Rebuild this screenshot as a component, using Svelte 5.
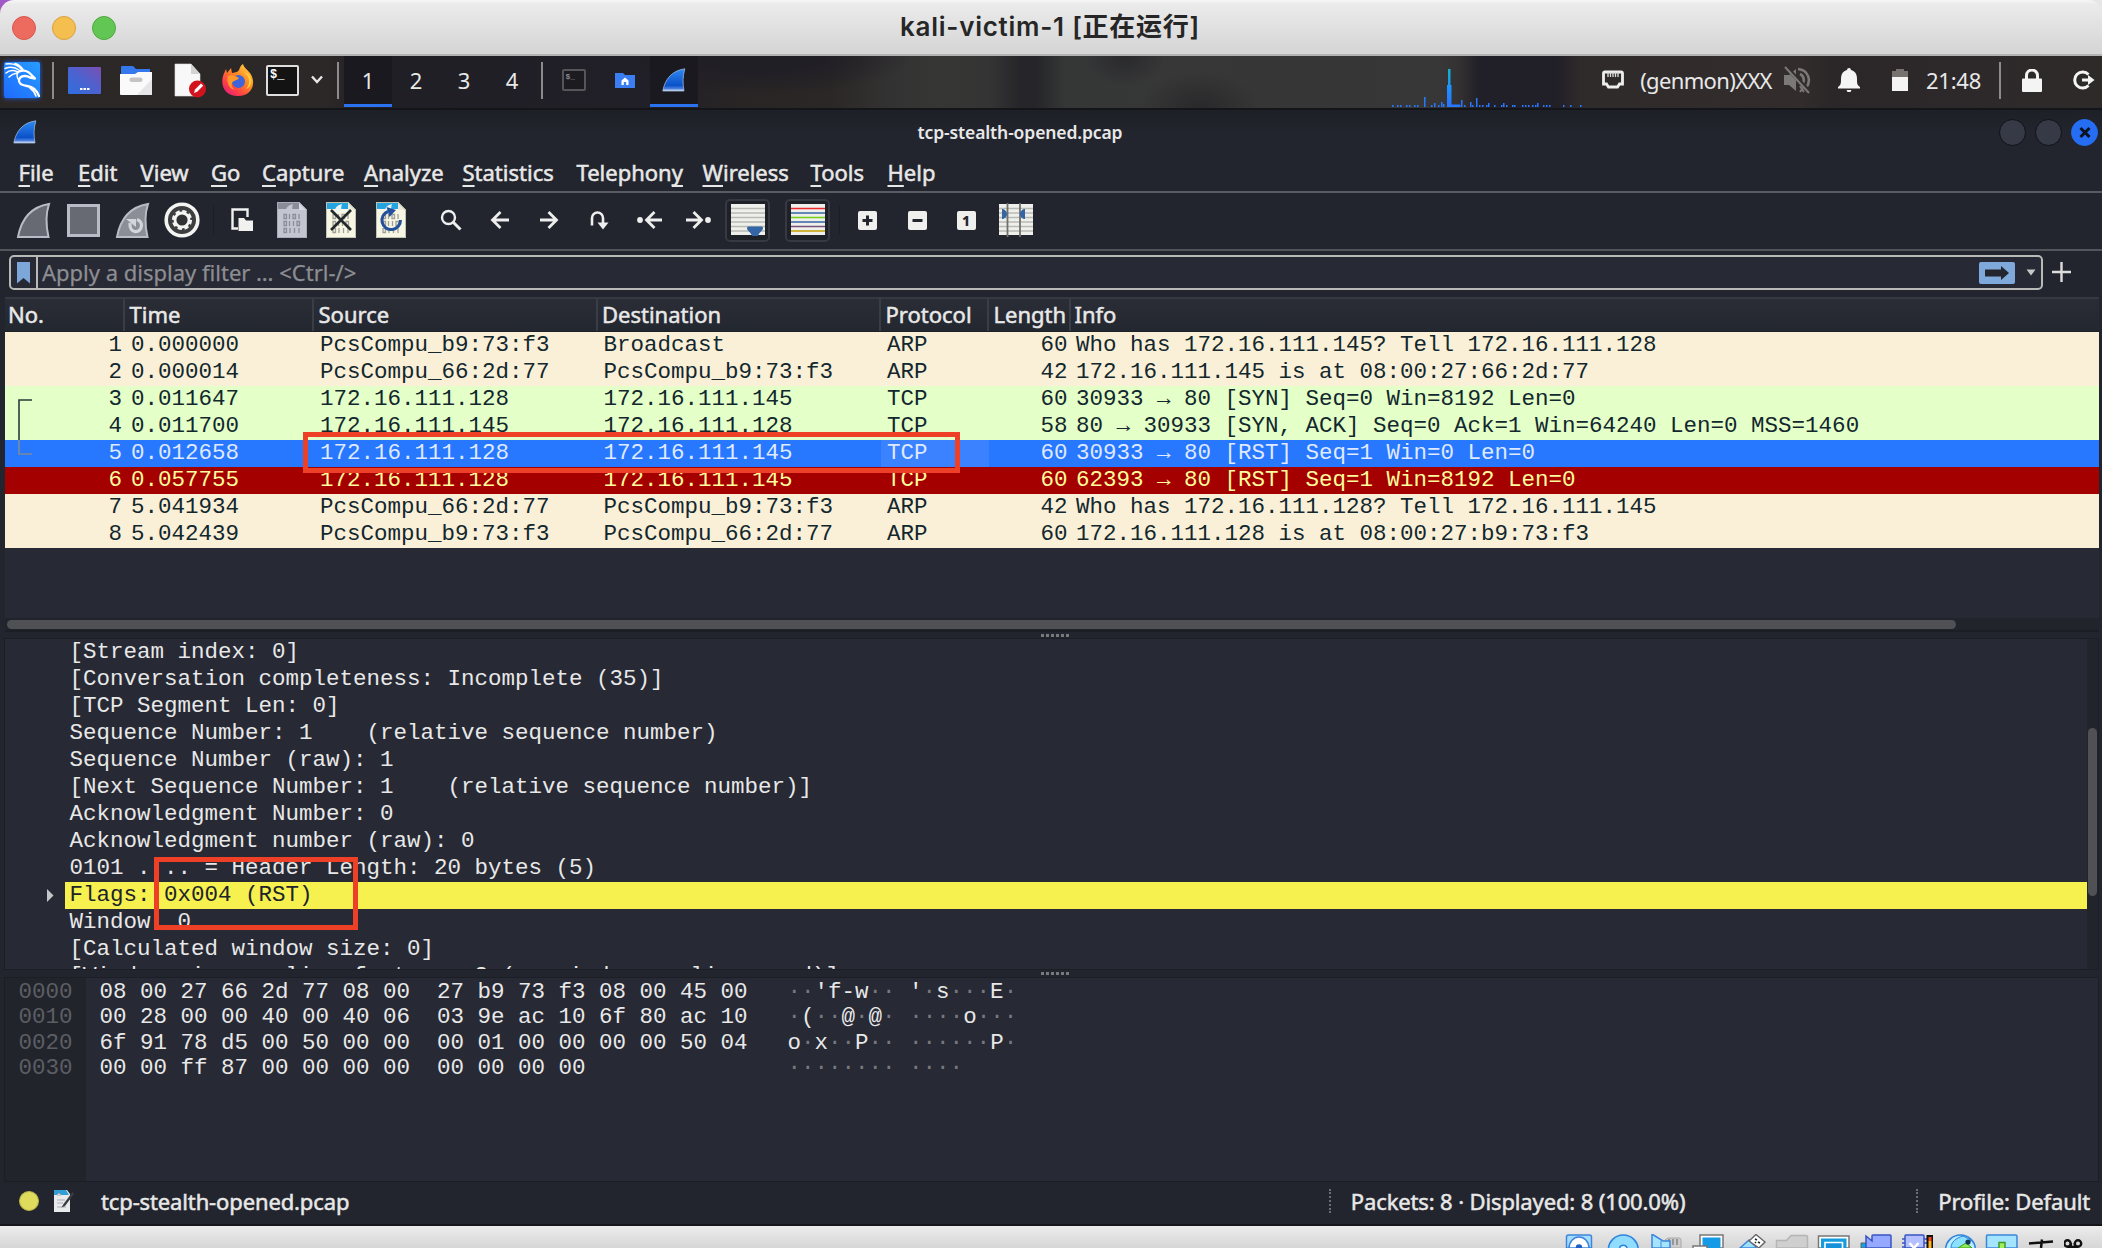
<script>
  const menus = [
    ['', 'F', 'ile'],
    ['', 'E', 'dit'],
    ['', 'V', 'iew'],
    ['', 'G', 'o'],
    ['', 'C', 'apture'],
    ['', 'A', 'nalyze'],
    ['', 'S', 'tatistics'],
    ['Telephon', 'y', ''],
    ['', 'W', 'ireless'],
    ['', 'T', 'ools'],
    ['', 'H', 'elp']
  ];

  const columns = ['No.', 'Time', 'Source', 'Destination', 'Protocol', 'Length', 'Info'];

  const packets = [
    ['arp', '1', '0.000000', 'PcsCompu_b9:73:f3', 'Broadcast', 'ARP', '60', 'Who has 172.16.111.145? Tell 172.16.111.128'],
    ['arp', '2', '0.000014', 'PcsCompu_66:2d:77', 'PcsCompu_b9:73:f3', 'ARP', '42', '172.16.111.145 is at 08:00:27:66:2d:77'],
    ['tcp', '3', '0.011647', '172.16.111.128', '172.16.111.145', 'TCP', '60', '30933 → 80 [SYN] Seq=0 Win=8192 Len=0'],
    ['tcp', '4', '0.011700', '172.16.111.145', '172.16.111.128', 'TCP', '58', '80 → 30933 [SYN, ACK] Seq=0 Ack=1 Win=64240 Len=0 MSS=1460'],
    ['selected', '5', '0.012658', '172.16.111.128', '172.16.111.145', 'TCP', '60', '30933 → 80 [RST] Seq=1 Win=0 Len=0'],
    ['reset', '6', '0.057755', '172.16.111.128', '172.16.111.145', 'TCP', '60', '62393 → 80 [RST] Seq=1 Win=8192 Len=0'],
    ['arp', '7', '5.041934', 'PcsCompu_66:2d:77', 'PcsCompu_b9:73:f3', 'ARP', '42', 'Who has 172.16.111.128? Tell 172.16.111.145'],
    ['arp', '8', '5.042439', 'PcsCompu_b9:73:f3', 'PcsCompu_66:2d:77', 'ARP', '60', '172.16.111.128 is at 08:00:27:b9:73:f3']
  ];

  const details = [
    '[Stream index: 0]',
    '[Conversation completeness: Incomplete (35)]',
    '[TCP Segment Len: 0]',
    'Sequence Number: 1    (relative sequence number)',
    'Sequence Number (raw): 1',
    '[Next Sequence Number: 1    (relative sequence number)]',
    'Acknowledgment Number: 0',
    'Acknowledgment number (raw): 0',
    '0101 .... = Header Length: 20 bytes (5)',
    'Flags: 0x004 (RST)',
    'Window: 0',
    '[Calculated window size: 0]',
    '[Window size scaling factor: -2 (no window scaling used)]'
  ];

  const hexRows = [
    ['0000', '08 00 27 66 2d 77 08 00  27 b9 73 f3 08 00 45 00', "··'f-w·· '·s···E·"],
    ['0010', '00 28 00 00 40 00 40 06  03 9e ac 10 6f 80 ac 10', '·(··@·@· ····o···'],
    ['0020', '6f 91 78 d5 00 50 00 00  00 01 00 00 00 00 50 04', 'o·x··P·· ······P·'],
    ['0030', '00 00 ff 87 00 00 00 00  00 00 00 00', '········ ····']
  ];

  // Unprintable bytes are drawn dimmer than printable ones.
  const runs = (s) => s.match(/·+|[^·]+/g);

  // CPU graph: [x, bar height]
  const load = [
    [2, 2], [7, 2], [10, 2], [16, 2], [19, 2], [24, 2], [27, 2], [34, 10], [41, 2], [44, 4], [48, 2], [51, 5], [53, 3],
    [57, 22], [58, 38], [59, 38], [60, 22], [63, 2], [66, 2], [69, 2], [71, 7], [74, 2], [80, 5], [82, 2], [86, 9],
    [89, 2], [92, 2], [96, 2], [98, 4], [104, 2], [111, 2], [113, 4], [116, 2], [122, 2], [124, 2], [132, 2], [135, 2],
    [138, 2], [142, 2], [145, 2], [147, 4], [153, 2], [156, 2], [159, 2], [173, 2], [180, 2], [190, 2]
  ];
</script>

{#snippet fin(size)}
  <svg class="fin {size}" viewBox="0 0 24 24">
    <defs>
      <linearGradient id="finblue" x1="0" y1="0" x2="0" y2="1">
        <stop offset="0" stop-color="#2f8af5" /><stop offset=".75" stop-color="#0a50c8" /><stop offset="1" stop-color="#7aa5ee" />
      </linearGradient>
    </defs>
    <path d="M.8 23C3 11 10 2.600 22.800.8 20.800 8 20.500 15 22 23z" fill="url(#finblue)" stroke="#9db6d8" stroke-width=".8" />
    <path d="M1.500 21.500h20l.3 1.500H1z" fill="#b4c8ec" />
  </svg>
{/snippet}

{#snippet page(kind)}
  <svg width="30" height="36" viewBox="0 0 30 36">
    <path d="M0 0h22l8 8v28H0z" fill={kind === 'save' ? '#c3c6d0' : '#f7f6e4'} />
    <path d="M0 0h22l6 7H0z" fill={kind === 'save' ? '#8a8d97' : '#24a5e2'} />
    <path d="M9 9c0-4 3-6 7-7-1 3-1 5 0 7z" fill={kind === 'save' ? '#c3c6d0' : '#e8f4fb'} />
    <path d="M22 0v8h8z" fill={kind === 'save' ? '#d7d9e0' : '#e9ead8'} />
    <path d="M0 .5h22l7.500 7.500v27.500H.5V0" fill="none" stroke={kind === 'save' ? '#a9acb7' : '#bfc1b2'} />
    <g fill="none" stroke={kind === 'save' ? '#8b8e98' : '#a09f96'} stroke-width="1.300">
      <path d="M7 12.500h2.500v4H7zM12.500 12v5M16 12.500h2.500v4H16zM22 12v5M7 19.500h2.500v4H7zM12.500 19v5M16.500 19v5M20 19.500h2.500v4H20zM7 26.500h2.500v4H7zM13 26v5M17.500 26v5M22 26v5" />
    </g>
    {#if kind === 'close'}
      <path d="M5 8l20 20M25 8L5 28" stroke="#23282b" stroke-width="2.600" />
    {:else if kind === 'reload'}
      <path d="M12 9.500a9.300 9.300 0 1 0 12.500 8.500" fill="none" stroke="#24509b" stroke-width="3" />
      <path d="M10.500 5l9.500 3-6.500 7z" fill="#24509b" />
    {/if}
  </svg>
{/snippet}

{#snippet grayfin(restart)}
  <svg width="35" height="37" viewBox="0 0 35 37">
    <path d="M2 35C5 19 14 5 33 2c-3 9-3 22-.5 33z" fill={restart ? '#8b8e97' : '#676a73'} stroke="#b9bcc6" stroke-width="2" />
    {#if restart}
      <path d="M15 21c-1 11 11 11 11.500 2.500 0-3-2-5-4.500-6" fill="none" stroke="#d3d5dd" stroke-width="3.200" />
      <path d="M11 17h10v8z" fill="#d3d5dd" />
    {/if}
  </svg>
{/snippet}

{#snippet note()}
  <svg width="20" height="22" viewBox="0 0 20 22">
    <path d="M0 0h13l3 4v18H0z" fill="#e8ebe9" /><path d="M0 0h12l3 5H0z" fill="#2f9fd4" />
    <path d="M3 5l2-2 2 2zM3 10h8M3 13h6M3 17h9" stroke="#aab" fill="#fff" />
    <path d="M18.500 2l-9 12-2 3.500 3.500-1.500 9-12z" fill="#3a3d40" />
  </svg>
{/snippet}

<div class="screen">
  <header class="mac-bar">
    <div class="lights"><i class="red"></i><i class="amber"></i><i class="green"></i></div>
    <h1>kali-victim-1 [正在运行]</h1>
  </header>

  <nav class="panel">
    <div class="slot">
      <svg width="42" height="46" viewBox="0 0 42 46">
        <defs><linearGradient id="kali" x1="0" y1="1" x2="1" y2="0"><stop offset="0" stop-color="#1f6bff" /><stop offset="1" stop-color="#269cff" /></linearGradient></defs>
        <rect class="glow" x="3" y="5" width="36" height="36" rx="2" fill="#1d62e8" />
        <rect x="3" y="5" width="36" height="36" rx="2" fill="url(#kali)" />
        <g fill="none" stroke="#fff" stroke-linecap="round" stroke-linejoin="round">
          <path d="M5 7c8-1 13 2 16 6M4 11.500c5-2 10-1.500 14 1.500M5 16c3-2.500 7-3 11-1.500M8 20c2-2 4.500-3.500 8-4M14 6.500c4 1 6 3 8 6" stroke-width="1.500" />
          <path d="M17 15c5-2.500 10-1.500 13 2.500l4 4-5-1c-4-2.500-10-2-11 2.500-.5 4 4 5.500 8 6 6 1 10 4 12 10" stroke-width="2.300" />
          <path d="M29 31c3 2 5 5 6 8M17 15c-1.500 2.500-1 6 1 8" stroke-width="1.600" />
        </g>
      </svg>
    </div>
    <div class="slot"><i class="divider"></i></div>
    <div class="slot">
      <svg width="33" height="27" viewBox="0 0 33 27">
        <defs><linearGradient id="desk" x1="0" y1="1" x2="1" y2="0"><stop offset="0" stop-color="#2e6fe0" /><stop offset=".5" stop-color="#4c62cf" /><stop offset="1" stop-color="#7a4fb2" /></linearGradient></defs>
        <rect width="33" height="27" rx="1" fill="url(#desk)" /><path d="M12 22h2.500M15.500 22h2.500M19 22h2.500" stroke="#fff" stroke-width="2" />
      </svg>
    </div>
    <div class="slot">
      <svg width="34" height="31" viewBox="0 0 34 31">
        <path d="M2 2q0-1 1-1h11l3 3h14v8H2z" fill="#3577ec" /><path d="M1 9h15l3-2h14v22q0 1-1 1H2q-1 0-1-1z" fill="#fafafa" />
        <path d="M33 14L18 30h14q1 0 1-1z" fill="#e6e6e8" /><rect x="10.500" y="12.500" width="13" height="4.500" rx="2" fill="#c4c4c4" />
      </svg>
    </div>
    <div class="slot">
      <svg width="34" height="35" viewBox="0 0 34 35">
        <path d="M2 1h16l9 10v22H2z" fill="#f8f8f8" stroke="#ddd" stroke-width=".6" /><path d="M18 1v10h9z" fill="#d3d3d3" />
        <circle cx="24.500" cy="26" r="8.500" fill="#d2131e" /><path d="M21 30l1-3.500 6-6 2.200 2.200-6 6z" fill="#fff" />
      </svg>
    </div>
    <div class="slot">
      <svg width="34" height="34" viewBox="0 0 34 34">
        <defs><linearGradient id="fox" x1="1" y1="0" x2=".2" y2="1"><stop offset="0" stop-color="#ffe14a" /><stop offset=".45" stop-color="#ff8a22" /><stop offset=".8" stop-color="#ff3b4a" /><stop offset="1" stop-color="#e0207a" /></linearGradient></defs>
        <path d="M22 1c1 4 4 5 7 9 7 10 2 23-12 23C5 33-1 24 2 13c1-3 2-5 3-7l1 4 4-5 1 5c4-1 6-1 7-3 1-3 2-5 4-6z" fill="url(#fox)" />
        <circle cx="17.500" cy="18.500" r="6.500" fill="#3f63d8" /><path d="M7 13c4-2 8 0 11 2-2 3-6 2-7 5-1 2 0 5 3 7-6-1-9-8-7-14z" fill="#ff9a28" />
        <path d="M23 9c6 4 7 12 2 17 7-2 8-14-2-17z" fill="#ffd23c" />
      </svg>
    </div>
    <div class="slot">
      <div class="term">$_</div>
    </div>
    <div class="slot"><svg width="14" height="10" viewBox="0 0 14 10"><path d="M2 1.500l5 5.500 5-5.500" fill="none" stroke="#e8e8e8" stroke-width="2.400" /></svg></div>
    <div class="slot"><i class="divider"></i></div>
    <div class="slot active">1</div>
    <div class="slot">2</div>
    <div class="slot">3</div>
    <div class="slot">4</div>
    <div class="slot"><i class="divider"></i></div>
    <div class="slot"><div class="term faded">$_</div></div>
    <div class="slot">
      <svg width="22" height="17" viewBox="0 0 22 17"><path d="M1 1h8l2 2h10v13H1z" fill="#3b7df2" /><path d="M7.500 13V8.500L11 5.500l3.500 3V13h-2.300v-3H9.800v3z" fill="#fff" /></svg>
    </div>
    <div class="slot active">{@render fin('small')}</div>
    <div class="spacer"></div>
    <div class="slot graph">
      <svg width="204" height="40" viewBox="0 0 204 40">
        <defs><linearGradient id="cpu" gradientUnits="userSpaceOnUse" x1="0" y1="40" x2="0" y2="0"><stop offset=".1" stop-color="#2777ff" /><stop offset=".5" stop-color="#1c93ff" /><stop offset="1" stop-color="#10b6c4" /></linearGradient></defs>
        {#each load as [x, h]}
          <rect x={x + 2} y={40 - h} width="1.500" height={h} fill="url(#cpu)" />
        {/each}
        <rect x="59" y="37.500" width="13" height="2.500" fill="#2777ff" />
      </svg>
    </div>
    <div class="slot">
      <svg width="22" height="20" viewBox="0 0 22 20"><path d="M3 2h16q1.500 0 1.500 1.500v10.500l-3 0-2 3H6.500l-2-3-3 0V3.500Q1.500 2 3 2z" fill="none" stroke="#eee" stroke-width="2.800" /><path d="M6 2v5M8.500 2v5M11 2v5M13.500 2v5M16 2v5" stroke="#ddd" stroke-width="1.300" /></svg>
    </div>
    <div class="slot genmon">(genmon)XXX</div>
    <div class="slot mute">
      <svg width="28" height="28" viewBox="0 0 28 28"><g fill="#7b7878"><path d="M1 9h5l7-6v22l-7-6H1z" /></g><g fill="none" stroke="#7b7878"><path d="M17 8c4 2 5 7 2 11M15 3c10 1 14 11 8 19" stroke-width="2.600" /><path d="M17 20l4 6M21 20l-4 6" stroke-width="2" /></g><path d="M3 1l24 25" stroke="#322e2e" stroke-width="4" /><path d="M2 1l24 26" stroke="#7b7878" stroke-width="2" /></svg>
    </div>
    <div class="slot">
      <svg width="22" height="24" viewBox="0 0 22 24"><path d="M11 0q2 0 2 2c4 1 6 4 6 9 0 4 0 6 3 8v1.500H0V19c3-2 3-4 3-8 0-5 2-8 6-9q0-2 2-2zM8.500 22h5l-1 2h-3z" fill="#f4f4f4" /></svg>
    </div>
    <div class="slot"><svg width="16" height="22" viewBox="0 0 16 22"><path d="M4 0h8v2h4v20H0V2h4z" fill="#77716f" /><path d="M0 8h16v14H0z" fill="#f4f4f4" /></svg></div>
    <div class="slot clock">21:48</div>
    <div class="slot"><i class="divider"></i></div>
    <div class="slot"><svg width="20" height="23" viewBox="0 0 20 23"><rect y="9.500" width="20" height="13.500" rx="1" fill="#f4f4f4" /><path d="M4.500 10V6.500a5.500 5.500 0 0 1 11 0V10" fill="none" stroke="#f4f4f4" stroke-width="3" /></svg></div>
    <div class="slot logout"><svg width="23" height="20" viewBox="0 0 23 20"><path d="M16.500 4.500A8 8 0 1 0 16.500 15.500" fill="none" stroke="#f4f4f4" stroke-width="3" /><path d="M10 8.500h6V5l6.500 5-6.500 5v-3.500h-6z" fill="#f4f4f4" /></svg></div>
  </nav>

  <main class="shark">
    <div class="titlebar">
      <div class="app-icon">{@render fin('small')}</div>
      <h2>tcp-stealth-opened.pcap</h2>
      <div class="controls">
        <i></i><i></i>
        <i class="close"><svg width="12" height="13" viewBox="0 0 12 13"><path d="M1.500 2l9 9M10.500 2l-9 9" stroke="#0c1222" stroke-width="3" /></svg></i>
      </div>
    </div>

    <div class="menubar">
      {#each menus as [pre, key, post]}
        <span>{pre}<u>{key}</u>{post}</span>
      {/each}
    </div>

    <div class="toolbar">
      <div class="slot gray">{@render grayfin(false)}</div>
      <div class="slot"><i class="stop"></i></div>
      <div class="slot gray">{@render grayfin(true)}</div>
      <div class="slot">
        <svg width="36" height="36" viewBox="0 0 36 36"><circle cx="18" cy="18" r="15.800" fill="#3c3e40" stroke="#f4f4f2" stroke-width="3.600" /><circle cx="18" cy="18" r="8.200" fill="none" stroke="#f4f4f2" stroke-width="3.800" stroke-dasharray="4 2.440" /><circle cx="18" cy="18" r="7" fill="#303234" stroke="#f4f4f2" stroke-width="2.800" /></svg>
      </div>
      <div class="slot"><i class="rule"></i></div>
      <div class="slot"><svg width="22" height="24" viewBox="0 0 22 24"><path d="M7 20.500H1.500V1.500h15V9" fill="none" stroke="#f1f1ef" stroke-width="2.400" /><path d="M7.500 10H13l2 2.500h7V23H7.500z" fill="#f1f1ef" /></svg></div>
      <div class="slot">{@render page('save')}</div>
      <div class="slot">{@render page('close')}</div>
      <div class="slot">{@render page('reload')}</div>
      <div class="slot"><svg width="22" height="22" viewBox="0 0 22 22"><circle cx="8.500" cy="8.500" r="6.500" fill="none" stroke="#eee" stroke-width="2.400" /><path d="M13 13l7.500 7.500" stroke="#eee" stroke-width="3" /></svg></div>
      <div class="slot"><svg width="20" height="20" viewBox="0 0 20 20"><path d="M19 10H3M10.500 2L2.500 10l8 8" fill="none" stroke="#eee" stroke-width="2.800" /></svg></div>
      <div class="slot"><svg width="20" height="20" viewBox="0 0 20 20"><path d="M1 10h16M9.500 2l8 8-8 8" fill="none" stroke="#eee" stroke-width="2.800" /></svg></div>
      <div class="slot"><svg width="20" height="20" viewBox="0 0 20 20"><path d="M3 15.500V8a5.500 5.500 0 0 1 11 0v9" fill="none" stroke="#eee" stroke-width="2.600" /><path d="M8.500 12.500h11L14 19.500z" fill="#eee" /></svg></div>
      <div class="slot"><svg width="25" height="20" viewBox="0 0 25 20"><circle cx="3" cy="10" r="2.900" fill="#eee" /><path d="M25 10H10M17.500 2l-8 8 8 8" fill="none" stroke="#eee" stroke-width="2.800" /></svg></div>
      <div class="slot"><svg width="25" height="20" viewBox="0 0 25 20"><circle cx="22" cy="10" r="2.900" fill="#eee" /><path d="M0 10h15M7.500 2l8 8-8 8" fill="none" stroke="#eee" stroke-width="2.800" /></svg></div>
      <div class="slot"><div class="toggle">
        <svg width="34" height="32" viewBox="0 0 34 32"><path d="M0 0h34v31H0z" fill="#efefec" /><path d="M0 4.500h34M0 9h34M0 13.500h34M0 18h34M0 22.500h34M0 27h34" stroke="#b9bab2" stroke-width="1.500" /><path d="M16 24q0-1.500 1.500-1.500h13q1.500 0 1.500 1.500c0 3-4 4-5 8h-6c-1-4-5-5-5-8z" fill="#3465a4" /></svg>
      </div></div>
      <div class="slot"><div class="toggle">
        <svg width="34" height="32" viewBox="0 0 34 32"><path d="M0 0h34v31H0z" fill="#efefec" /><g stroke-width="1.700"><path d="M0 4.500h34" stroke="#ef2929" /><path d="M0 9h34" stroke="#3465a4" /><path d="M0 13.500h34" stroke="#73d216" /><path d="M0 18h34" stroke="#3465a4" /><path d="M0 22.500h34" stroke="#75507b" /><path d="M0 27h34" stroke="#c4a000" /></g></svg>
      </div></div>
      <div class="slot"><i class="rule"></i></div>
      <div class="slot"><b class="key"><svg width="19" height="19" viewBox="0 0 19 19"><path d="M9.500 4.500v10M4.500 9.500h10" stroke="#23252e" stroke-width="3" /></svg></b></div>
      <div class="slot"><b class="key"><svg width="19" height="19" viewBox="0 0 19 19"><path d="M4.500 9.500h10" stroke="#23252e" stroke-width="3" /></svg></b></div>
      <div class="slot"><b class="key">1</b></div>
      <div class="slot">
        <svg width="34" height="34" viewBox="0 0 34 34"><path d="M0 1h34v31H0z" fill="#efefec" /><path d="M0 5.500h34M0 10h34M0 14.500h34M0 19h34M0 23.500h34M0 28h34" stroke="#b9bab2" stroke-width="1.500" /><path d="M8.500 0v34M21 0v34" stroke="#6e706a" stroke-width="1.800" /><path d="M3 6c2 0 5 2 5 5s-3 5-5 5zM26 6c-2 0-5 2-5 5s3 5 5 5z" fill="#3465a4" /></svg>
      </div>
    </div>

    <div class="filterbar">
      <div class="filter">
        <div class="mark"><svg width="13" height="22" viewBox="0 0 13 22"><path d="M0 0h13v21.500L6.500 16 0 21.500z" fill="#7da7d8" /></svg></div>
        <span class="hint">Apply a display filter … &lt;Ctrl-/&gt;</span>
        <svg width="36" height="22" viewBox="0 0 36 22"><rect width="36" height="22" rx="2" fill="#7ea9da" /><path d="M6 7.500h16V4l8 7-8 7v-3.500H6z" fill="#23262e" /></svg>
        <svg class="caret" width="10" height="7" viewBox="0 0 10 7"><path d="M.5.5h9L5 6.500z" fill="#c8c8c8" /></svg>
      </div>
      <svg class="add" width="19" height="20" viewBox="0 0 19 20"><path d="M9.500 0v20M0 10h19" stroke="#ddd" stroke-width="2.400" /></svg>
    </div>

    <section class="packets">
      <div class="grid head">
        {#each columns as c}<span>{c}</span>{/each}
      </div>
      {#each packets as [kind, ...cells]}
        <div class="grid row {kind}">
          {#each cells as cell}<span>{cell}</span>{/each}
        </div>
      {/each}
      <div class="hscroll"><i></i></div>
      <svg class="bracket" width="14" height="56" viewBox="0 0 14 56"><path d="M14 1H1v40" fill="none" stroke="#2b3a3a" stroke-width="1.600" /><path d="M1 41v14h13" fill="none" stroke="#7d8a9c" stroke-width="1.600" /></svg>
      <div class="callout first"></div>
    </section>

    <div class="splitter"><i></i><i></i><i></i><i></i><i></i><i></i></div>

    <section class="details">
      <div class="lines">
        {#each details as line, i}
          <div class="line" class:flagged={i === 9}>
            {#if i === 9}<svg class="twist" width="7" height="13" viewBox="0 0 7 13"><path d="M0 0l6.500 6.500L0 13z" fill="#c4c6c9" /></svg>{/if}
            <span>{line}</span>
          </div>
        {/each}
      </div>
      <div class="vscroll"><i></i></div>
      <div class="callout second"></div>
    </section>

    <div class="splitter low"><i></i><i></i><i></i><i></i><i></i><i></i></div>

    <section class="bytes">
      {#each hexRows as [offset, hex, ascii]}
        <div class="hexrow">
          <span class="offset">{offset}</span>
          <span class="hex">{hex}</span>
          <span>{#each runs(ascii) as run}<span class:dim={run[0] === '·'}>{run}</span>{/each}</span>
        </div>
      {/each}
    </section>

    <footer class="status">
      <i class="led"></i>
      {@render note()}
      <span class="file">tcp-stealth-opened.pcap</span>
      <i class="grip"></i>
      <span class="count">Packets: 8 · Displayed: 8 (100.0%)</span>
      <i class="grip"></i>
      <span class="profile">Profile: Default</span>
    </footer>
  </main>

  <footer class="vm-bar">
    <svg viewBox="0 0 42.200 14"><path d="M8.500 14V3q0-2 2-2h21q2 0 2 2v11z" fill="#a5ddff" stroke="#3d85dc" stroke-width="1.500" /><path d="M11 14a10 11 0 0 1 20 0z" fill="#fff" stroke="#3d85dc" stroke-width="1.500" /><circle cx="21" cy="13.500" r="3.200" fill="#1d5fc4" /></svg>
    <svg viewBox="0 0 42.200 14"><circle cx="23.300" cy="16" r="15" fill="#8fdcff" stroke="#2f83dd" stroke-width="1.500" /><path d="M19.500 14a4 4 0 0 1 7.600 0" fill="#eaf8ff" stroke="#2f83dd" stroke-width="1.500" /></svg>
    <svg viewBox="0 0 42.200 14"><path d="M23 14V6l3-2h11q2 0 2 2v8z" fill="#ccc" stroke="#aaa" /><path d="M27 5v6M31 5v6M35 5v6" stroke="#888" stroke-width="1.600" /><path d="M10 0v14h18V7h-7L10 0z" fill="#a5e4ff" stroke="#3d85dc" stroke-width="1.500" /><path d="M19 7v7" stroke="#3d85dc" /></svg>
    <svg viewBox="0 0 42.200 14"><path d="M15 14V1h23v13z" fill="#fff" stroke="#777" stroke-width="1.500" /><path d="M17.500 3.500h18V14h-18z" fill="#159be6" /><path d="M8 14v-2h14v2" fill="#fff" stroke="#777" stroke-width="1.500" /></svg>
    <svg viewBox="0 0 42.200 14"><path d="M13 14L22 6l7 7v1z" fill="#9ee0fa" stroke="#3d85dc" stroke-width="1.500" /><path d="M22 7l7-6.500 9 7.500-6 6z" fill="#fff" stroke="#666" stroke-width="1.400" /><path d="M28 5l2 1M31 8l2 1M28 8l1 1" stroke="#222" stroke-width="1.600" /></svg>
    <svg viewBox="0 0 42.200 14"><path d="M7.500 14V6.500h10L22 1.500h15q1.500 0 1.500 1.500v11z" fill="#cfcfcf" stroke="#b5b5b5" stroke-width="1.500" /></svg>
    <svg viewBox="0 0 42.200 14"><path d="M7.500 14V2H38v12z" fill="#fff" stroke="#777" stroke-width="1.500" /><path d="M10 14V4.500h25.500V14z" fill="#149ddd" /><path d="M14 14V8.500h17.500V14" fill="#1591dc" stroke="#fff" stroke-width="1.600" /></svg>
    <svg viewBox="0 0 42.200 14"><path d="M8 14V9h6v5z" fill="#10a4e4" stroke="#666" /><path d="M13 2l6 5V2q0-1 1-1h17q1 0 1 1v12H13z" fill="#94a9ff" stroke="#3953c4" stroke-width="1.500" /></svg>
    <svg viewBox="0 0 42.200 14"><path d="M9 14V2q0-1 1-1h17q1 0 1 1v12z" fill="#b3bfff" stroke="#3953c4" stroke-width="1.500" /><path d="M6 5h3M6 9h3M6 13h3M28 5h3M28 9h3" stroke="#3953c4" stroke-width="1.600" /><path d="M13.500 9l4.500 5 4.500-5" fill="none" stroke="#fff" stroke-width="2.500" /><path d="M30.500 14V1H37v13z" fill="#111" /><path d="M32.500 3h3v4h-3z" fill="#ff4a18" /><path d="M32.500 7h3v7h-3z" fill="#ffb61e" /></svg>
    <svg viewBox="0 0 42.200 14"><circle cx="22.500" cy="16" r="15" fill="#bdeeff" stroke="#2f83dd" stroke-width="1.500" /><path d="M13 14c0-6 5-10 12-12l8 4-5 8z" fill="#8be0ff" stroke="#2f83dd" /><path d="M20 14l8-5 6 5z" fill="#8eed54" stroke="#419b25" /><circle cx="30" cy="8" r="2.600" fill="#123456" /></svg>
    <svg viewBox="0 0 42.200 14"><path d="M6.500 14V2q0-1 1-1h28q1.500 0 1.500 1v12z" fill="#a5e4ff" stroke="#3d85dc" stroke-width="1.500" /><path d="M19 14V8.500h6V14" fill="#9fef5e" stroke="#3f9a2b" stroke-width="1.500" /></svg>
    <svg viewBox="0 0 42.200 14"><path d="M7 9.500l24-2M20 5.500l-1 8.500" fill="none" stroke="#111" stroke-width="2.500" /></svg>
    <svg viewBox="0 0 42.200 14"><circle cx="3.500" cy="9.500" r="3.200" fill="none" stroke="#111" stroke-width="2.400" /><circle cx="14" cy="9.500" r="3.200" fill="none" stroke="#111" stroke-width="2.400" /><path d="M3.500 12.900H14M7 9v5M10.800 9v5" stroke="#111" stroke-width="2.200" /></svg>
  </footer>
</div>

<style>
  :global(body) {
    margin: 0;
    background: #b9b3c4;
    overflow: hidden;
  }
  * { box-sizing: border-box; }
  svg { display: block; flex: none; }
  h1, h2 { margin: 0; }

  .screen {
    width: 2102px;
    height: 1248px;
    display: flex;
    flex-direction: column;
    overflow: hidden;
    background: linear-gradient(90deg, #a05ac8 0 40px, #e6e6e6 60px);
    font-family: 'Noto Sans', 'Noto Sans CJK SC', sans-serif;
    font-size: 22px;
    color: #e8e8e8;
  }

  .mac-bar {
    height: 56px;
    flex: none;
    position: relative;
    display: flex;
    align-items: center;
    justify-content: center;
    border-radius: 14px 14px 0 0;
    background: linear-gradient(#f7f7f7 0, #ebebeb 4px, #d5d5d5 53px);
    border-bottom: 2px solid #b3b3b3;
  }
  .mac-bar h1 {
    font: 600 26px/54px Inter, 'Noto Sans CJK SC', sans-serif;
    letter-spacing: .75px;
    color: #262626;
    margin-right: 2px;
  }
  .lights {
    position: absolute;
    left: 12px;
    top: 16px;
    display: flex;
    gap: 16px;
  }
  .lights i {
    width: 24px;
    height: 24px;
    border-radius: 50%;
    border: 1px solid #d8574c;
    background: #ed6a5f;
  }
  .lights .amber { background: #f5bf4f; border-color: #d9a13a; }
  .lights .green { background: #62c655; border-color: #51a73f; }

  .slot {
    display: flex;
    align-items: center;
    justify-content: center;
  }

  .panel {
    height: 52px;
    flex: none;
    display: grid;
    grid-template-columns:
      43px 20px 42px 61px 47px 50px 39px 30px 12px repeat(4, 48px) 12px 51px 51px 48px
      1fr 204px 41px 147px 35px 67px 36px 72px 20px 44px 48px;
    background:
      radial-gradient(ellipse 40px 30px at 1125px 0, #26262bcc, #26262b00),
      radial-gradient(ellipse 60px 36px at 1200px 52px, #252528cc, #25252800),
      radial-gradient(ellipse 150px 40px at 760px 0, #211f26 40%, #211f2600),
      linear-gradient(90deg, #2c2727 0, #2d2828 320px, #211f26 390px, #211f27 650px, #292525 740px,
      #2b2726 830px, #333232 890px, #363635 940px, #343434 990px, #26262a 1020px, #26262a 1036px, #353636 1066px, #373737 1180px,
      #373636 1300px, #383737 1440px, #343232 1458px, #211f27 1480px, #211f27 1556px, #302b2b 1582px, #322d2c 1800px, #2b2729 1830px, #2f2a2a 2102px);
  }
  .panel .slot { padding-bottom: 4px; }
  .panel .active {
    background: #19191f;
    border-bottom: 3px solid #2a72f0;
    padding: 0;
    margin-bottom: 1px;
  }
  .panel .genmon { letter-spacing: -.65px; padding-right: 1px; }
  .panel .mute { padding-right: 2px; }
  .panel .clock { letter-spacing: -.2px; padding-right: 1px; }
  .divider {
    width: 2px;
    height: 37px;
    background: #8c8a8a;
  }
  .glow { filter: blur(2.5px); }
  .term {
    width: 33px;
    height: 31px;
    border: 2px solid #dedede;
    border-radius: 2px;
    background: #131313;
    font: bold 12px/17px 'Liberation Mono', monospace;
    padding-left: 2px;
    color: #fff;
  }
  .term.faded {
    width: 24px;
    height: 22px;
    border-color: #56565a;
    font-size: 8px;
    line-height: 12px;
    color: #8a8a8e;
    background: #1c1c20;
  }
  .fin.small { width: 24px; height: 24px; }
  .panel .graph { align-items: flex-end; justify-content: flex-start; padding-bottom: 1px; }
  .panel .logout { justify-content: flex-end; padding-right: 7px; }

  .shark {
    flex: none;
    height: 1118px;
    display: flex;
    flex-direction: column;
    background: #23252e;
    border-top: 2px solid #141519;
    border-bottom: 2px solid #15161b;
  }
  .titlebar {
    height: 45px;
    flex: none;
    display: grid;
    grid-template-columns: 132px 1fr 132px;
    align-items: center;
    padding-bottom: 1px;
    background: linear-gradient(#1e2028, #23252e 24px);
  }
  .app-icon { padding-left: 13px; }
  .titlebar h2 {
    font: 600 17.500px/24px 'Noto Sans', sans-serif;
    letter-spacing: -.12px;
    text-align: center;
    position: relative;
    left: -31px;
  }
  .controls { display: flex; gap: 9px; justify-content: flex-end; padding-right: 4px; }
  .controls i {
    width: 27px;
    height: 27px;
    border-radius: 50%;
    background: #363a47;
    border: 1.500px solid #101116;
    display: grid;
    place-items: center;
  }
  .controls .close { background: #256df3; border-color: #256df3; }

  .menubar, .head, .status { -webkit-text-stroke: .5px currentColor; }
  .menubar {
    height: 38px;
    flex: none;
    display: grid;
    grid-template-columns: 59.500px 62.500px 70.500px 51px 102px 98.500px 114px 126px 108px 77px 1fr;
    padding-left: 18.500px;
    border-bottom: 2px solid #5a5c64;
    line-height: 34px;
  }
  .menubar span { white-space: nowrap; }
  u { text-decoration: underline; text-decoration-thickness: 2px; text-underline-offset: 4px; text-decoration-skip-ink: none; }

  .toolbar {
    height: 58px;
    flex: none;
    display: grid;
    grid-template-columns: 50px 48px 51px 48px 14px 44px 55px 44px 56px 63px 36px 62px 38px 62px 36px 63px 57px 6px 50px 50px 48px 52px;
    padding: 0 0 2px 9px;
    border-bottom: 2px solid #53555d;
  }
  .toolbar .gray { padding-right: 1px; }
  .stop { width: 33px; height: 33px; background: #676a73; border: 3px solid #b9bcc6; }
  .rule { width: 1px; height: 28px; background: #1b1d24; }
  .toggle {
    width: 45px;
    height: 43px;
    display: grid;
    place-items: center;
    background: #1e2128;
    border: 2px solid #363942;
    border-radius: 5px;
  }
  .key {
    width: 19px;
    height: 19px;
    border-radius: 2px;
    background: #efefed;
    color: #23252e;
    font: 800 14px/19px 'Noto Sans', sans-serif;
    text-align: center;
  }

  .filterbar {
    height: 46px;
    flex: none;
    display: flex;
    padding: 4px 0 0 9px;
    gap: 9px;
  }
  .filter {
    width: 2034px;
    height: 35px;
    display: flex;
    align-items: center;
    border: 2px solid #b9b9b7;
    border-radius: 5px;
    background: #272934;
  }
  .mark {
    width: 27px;
    align-self: stretch;
    display: grid;
    place-items: center;
    padding-right: 1px;
    border-right: 2px solid #b9b9b7;
  }
  .hint { flex: 1; padding: 0 0 1px 4px; color: #8d8e92; line-height: 30px; -webkit-text-stroke: .25px currentColor; }
  .caret { margin: 0 5px 0 11px; }
  .add { margin-top: 7px; }

  .packets {
    height: 335px;
    flex: none;
    margin: 0 3px 0 5px;
    position: relative;
    background: #272934;
    border-bottom: 2px solid #1c1e25;
    display: flex;
    flex-direction: column;
  }
  .grid {
    display: grid;
    grid-template-columns: 120px 189px 283.500px 283.500px 108px 81.500px 1fr;
    flex: none;
  }
  .head {
    height: 35px;
    border-top: 2px solid #363943;
    background: linear-gradient(#2a2d36, #23272f);
    border-bottom: 1px solid #1d2027;
    line-height: 31px;
  }
  .head span { padding-left: 4.500px; border-right: 2px solid #3a3d46; white-space: nowrap; }
  .head span:first-child { padding-left: 3px; }
  .head span:last-child { border-right: 0; padding-left: 4px; }
  .row, .line, .hexrow {
    font-family: 'Liberation Mono', monospace;
    font-size: 22.500px;
    white-space: pre;
  }
  .row { height: 27px; line-height: 27px; color: #12272e; }
  .row span { padding-left: 6px; }
  .row span:last-child { padding-left: 5.500px; }
  .row span:nth-child(1), .row span:nth-child(6) { text-align: right; padding-right: 3px; }
  .arp { background: #faf0d7; }
  .tcp { background: #e4ffc7; }
  .reset { background: #a40000; color: #fffc9c; }
  .selected { background: #2777ff; color: #dfe9ff; }
  .selected span:nth-child(5) { background: #3a82ff; }
  .hscroll {
    margin-top: auto;
    height: 12px;
    padding: 2px 0 0 2px;
    background: #22242c;
  }
  .hscroll i { display: block; width: 1949px; height: 9px; border-radius: 5px; background: #505154; }
  .bracket { position: absolute; left: 13px; top: 102px; }
  .callout { position: absolute; border: 5px solid #ee4026; }
  .first { left: 298px; top: 135px; width: 657px; height: 41px; }

  .splitter { height: 6px; flex: none; display: flex; gap: 2px; justify-content: center; align-items: center; padding-left: 7px; }
  .splitter.low { height: 7px; }
  .splitter i { width: 3px; height: 3px; background: #77797f; }

  .details {
    height: 332px;
    flex: none;
    margin: 0 3px 0 4px;
    position: relative;
    display: flex;
    background: #272934;
    border: 1px solid #1c1e25;
  }
  .lines { flex: 1; overflow: hidden; padding: 0 0 0 42px; }
  .line { height: 27px; line-height: 27px; display: flex; align-items: center; padding-left: 18px; }
  .line span { padding-left: 4.500px; height: 27px; flex: 1; }
  .flagged { padding-left: 0; }
  .flagged span { background: #f6f14f; color: #20232a; }
  .twist { margin-right: 11px; }
  .vscroll { width: 11px; background: #22242c; padding: 89px 1px 0 1px; }
  .vscroll i { display: block; height: 168px; border-radius: 5px; background: #505154; }
  .second { left: 149px; top: 218px; width: 204px; height: 73px; }

  .bytes {
    height: 205px;
    flex: none;
    margin: 0 3px 0 4px;
    border: 1px solid #1c1e25;
    padding-top: 1.500px;
    background: linear-gradient(90deg, #22242c 81px, #272934 81px);
  }
  .hexrow { display: flex; height: 25.500px; line-height: 25.500px; }
  .offset { width: 80.500px; padding-left: 13.500px; color: #5c5e64; }
  .hex { width: 702px; padding-left: 14px; }
  .dim { color: #77797e; }

  .status {
    flex: 1;
    display: flex;
    align-items: center;
    padding: 0 12px 4px 19px;
    letter-spacing: -.13px;
  }
  .led { width: 20px; height: 20px; border-radius: 50%; background: #dfdb5c; border: 1px solid #b9b54a; margin-right: 15px; }
  .file { margin-left: 27px; width: 1229px; }
  .grip { height: 24px; border-left: 2px dotted #6b6d73; margin-right: 20px; flex: none; }
  .count { width: 566px; }
  .profile { flex: 1; white-space: nowrap; }

  .vm-bar {
    flex: 1;
    display: flex;
    align-items: flex-end;
    padding-left: 1558px;
    background: linear-gradient(#ececec, #d6d6d6);
  }
  .vm-bar svg { width: 42.200px; height: 14px; }
</style>
